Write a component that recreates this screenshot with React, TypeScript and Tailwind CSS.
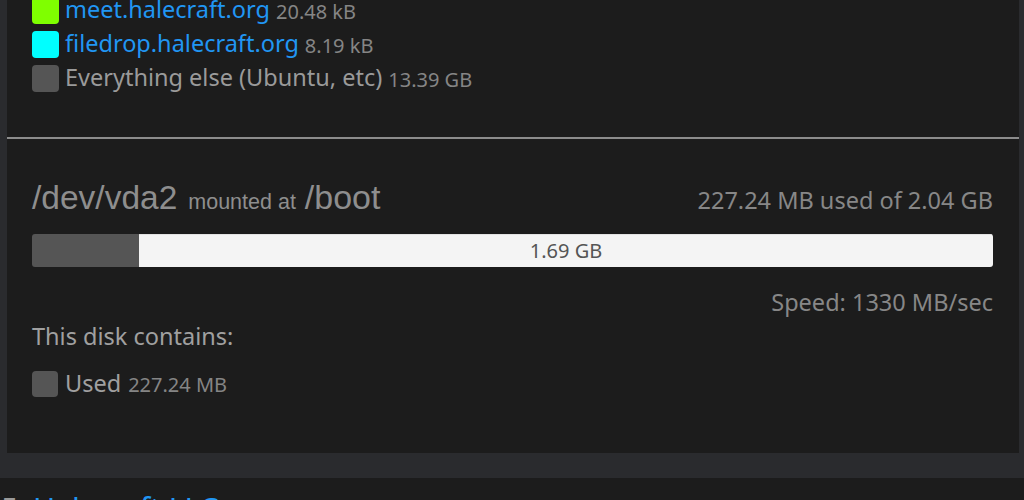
const body = { fontFamily: '"Noto Sans", "Open Sans", sans-serif' };
const helv = { fontFamily: '"Liberation Sans", Arial, sans-serif' };

interface Item {
  name: string;
  size: string;
  color: string;
  link?: boolean;
}

const items: Item[] = [
  { name: "meet.halecraft.org", size: "20.48 kB", color: "bg-[#7fff00]", link: true },
  { name: "filedrop.halecraft.org", size: "8.19 kB", color: "bg-[#00ffff]", link: true },
  { name: "Everything else (Ubuntu, etc)", size: "13.39 GB", color: "bg-[#555555]" },
];

function Legend({ item }: { item: Item }) {
  return (
    <div className="flex items-center h-[34px] gap-[6px] leading-none">
      <span className={`w-[27px] h-[27px] rounded-[4px] shrink-0 ${item.color}`} />
      <span className={`text-[23.5px] ${item.link ? "text-[#2196f3]" : "text-[#9a9a9a]"}`}>{item.name}</span>
      <span className="text-[20px] text-[#858585] pt-[3px]">{item.size}</span>
    </div>
  );
}

export default function App() {
  return (
    <div className="w-[1024px] h-[500px] overflow-hidden bg-[#1c1c1c]" style={body}>
      <div className="bg-[#2a2b2e] pl-[7px] pr-[5px] pb-[25px]">
        <div className="bg-[#1c1c1c]">
          <div className="px-[25px] mt-[-7px] pb-[42px]">
            {items.map((it) => (
              <Legend key={it.name} item={it} />
            ))}
          </div>

          <div className="border-t-2 border-[#8c8c8c]" />

          <div className="pr-[26px] pl-[25px] pt-[41px] pb-[54px]">
            <div className="flex items-baseline justify-between leading-none">
              <div className="flex items-baseline text-[#8e8e8e]" style={helv}>
                <span className="text-[33.5px]">/dev/vda2</span>
                <span className="text-[21.5px] ml-[11px] mr-[9px]">mounted at</span>
                <span className="text-[34px]">/boot</span>
              </div>
              <div className="text-[23.5px] text-[#878787]" style={body}>227.24 MB used of 2.04 GB</div>
            </div>

            <div className="mt-[19px] flex h-[33px] rounded-[3px] overflow-hidden">
              <div className="w-[107px] bg-[#555555]" />
              <div className="flex-1 bg-[#f4f4f4] border-t border-[#e2e2e2] flex items-center justify-center text-[20px] text-[#555555]">
                1.69 GB
              </div>
            </div>

            <div className="mt-[22px] text-right text-[23.5px] leading-[27px] text-[#878787]">Speed: 1330 MB/sec</div>

            <div className="mt-[6px] text-[23.5px] leading-[28px] text-[#a0a0a0]">This disk contains:</div>

            <div className="mt-[19px] flex items-center gap-[7px] h-[30px] leading-none">
              <span className="w-[26px] h-[26px] rounded-[4px] bg-[#555555]" />
              <span className="text-[23.5px] text-[#a0a0a0]">Used</span>
              <span className="text-[20px] text-[#858585] pt-[3px]">227.24 MB</span>
            </div>
          </div>
        </div>
      </div>

      <div className="pt-[16px] flex items-baseline text-[30px] leading-none">
        <span className="w-[33px] text-[#9a9a9a] pl-[1px]">5.</span>
        <span className="text-[#2196f3]">Halecraft LLC</span>
      </div>
    </div>
  );
}
